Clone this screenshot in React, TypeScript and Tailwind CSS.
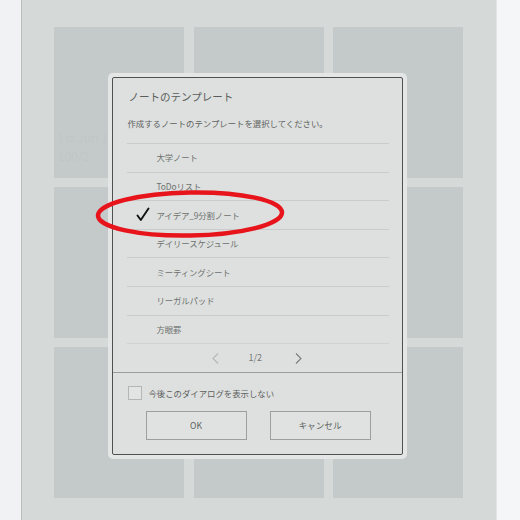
import { Fragment } from "react";

// template names shown in the dialog list
const templates = [
  "大学ノート",
  "ToDoリスト",
  "アイデア_9分割ノート",
  "デイリースケジュール",
  "ミーティングシート",
  "リーガルパッド",
  "方眼罫",
];

const selected = 2;

function Tile({ ghost }: { ghost?: string[] }) {
  return (
    <div className="h-[151px] bg-[#c4cacA] pl-[4px] pt-[104px] flex flex-col gap-[5px]">
      {ghost?.map((g) => (
        <span key={g} className="text-[12px] leading-[13px] text-[#c0c6c6]">
          {g}
        </span>
      ))}
    </div>
  );
}

function Check() {
  return (
    <svg width="14" height="15" viewBox="0 0 14 15">
      <path
        d="M1.5 8.5 L4.8 13 L12.5 1.5"
        fill="none"
        stroke="#111"
        strokeWidth="1.9"
        strokeLinecap="round"
        strokeLinejoin="round"
      />
    </svg>
  );
}

function Chevron({ dir, color }: { dir: "left" | "right"; color: string }) {
  return (
    <svg width="7" height="11" viewBox="0 0 7 11">
      <path
        d={dir === "left" ? "M6 0.5 L1 5.5 L6 10.5" : "M1 0.5 L6 5.5 L1 10.5"}
        fill="none"
        stroke={color}
        strokeWidth="1.1"
      />
    </svg>
  );
}

export default function App() {
  return (
    <div className="relative w-[520px] h-[520px] overflow-hidden flex font-['Noto_Sans_CJK_JP','Noto_Sans',sans-serif]">
      {/* left bezel */}
      <div className="w-[22px] h-full bg-[#f1f2f3] border-r border-[#b9bebd]" />

      {/* e-ink screen */}
      <div className="relative w-[474px] h-full bg-[#d5d9d7]">
        <div className="grid grid-cols-[130px_130px_130px] gap-x-[9.5px] gap-y-[9px] pl-[32px] pt-[27px]">
          <Tile ghost={["1st Jun 12", "100/2"]} />
          <Tile />
          <Tile />
          <Tile />
          <Tile />
          <Tile />
          <Tile />
          <Tile />
          <Tile />
        </div>

        {/* dialog */}
        <div className="absolute left-[86px] top-[73px] w-[299px] rounded-[5px] bg-[#e4e6e5] p-[4px]">
          <div className="h-[378px] rounded-[2px] border-[1.5px] border-[#4e5150] bg-[#dde0de] flex flex-col">
            <div className="pl-[15.5px] pt-[11px] h-[29px] text-[10.5px] leading-[16px] text-[#5a5c5b]">
              ノートのテンプレート
            </div>
            <div className="pl-[14.5px] mt-[10px] h-[12px] text-[8.4px] leading-[12px] text-[#5e605f]">
              作成するノートのテンプレートを選択してください。
            </div>

            <div className="mt-[14px] mx-[13.5px]">
              {templates.map((t, i) => (
                <div
                  key={t}
                  className="h-[28.6px] border-t border-[#c9cccA] flex items-center"
                >
                  <div className="w-[30px] pl-[9px] flex items-center">
                    {i === selected && <Check />}
                  </div>
                  <span className="text-[8.4px] text-[#6e706f] tracking-[-0.1px]">{t}</span>
                </div>
              ))}
              <div className="h-[29px] border-t border-[#d0d3d1] flex items-center">
                <div className="ml-[85px]">
                  <Chevron dir="left" color="#b4b7b6" />
                </div>
                <span className="ml-[30px] text-[9px] text-[#777a79]">1/2</span>
                <div className="ml-[33px]">
                  <Chevron dir="right" color="#7a7d7c" />
                </div>
              </div>
            </div>

            <div className="border-t border-[#9a9d9c] flex-1 flex flex-col">
              <div className="mt-[13px] pl-[14.5px] flex items-center gap-[7px]">
                <div className="w-[14px] h-[14px] border border-[#b3b6b5] bg-[#e2e4e3]" />
                <span className="text-[8.4px] text-[#5e605f]">
                  今後このダイアログを表示しない
                </span>
              </div>
              <div className="mt-[11px] flex justify-center gap-[23px] pl-[1px]">
                {["OK", "キャンセル"].map((b) => (
                  <Fragment key={b}>
                    <div className="w-[101px] h-[29px] border border-[#9c9f9e] bg-[#dfe2e0] flex items-center justify-center text-[8.6px] text-[#606261]">
                      {b}
                    </div>
                  </Fragment>
                ))}
              </div>
            </div>
          </div>
        </div>
      </div>

      {/* right bezel */}
      <div className="w-[24px] h-full bg-[#f5f6f7] border-l border-[#e2e5e6]" />

      {/* red marker drawn on the photo */}
      <svg
        className="absolute left-[94px] top-[189px]"
        width="194"
        height="52"
        viewBox="0 0 194 52"
      >
        <ellipse
          cx="96"
          cy="25"
          rx="92"
          ry="21.5"
          fill="none"
          stroke="#e8141b"
          strokeWidth="4.5"
          transform="rotate(-1 96 25)"
        />
      </svg>
    </div>
  );
}
